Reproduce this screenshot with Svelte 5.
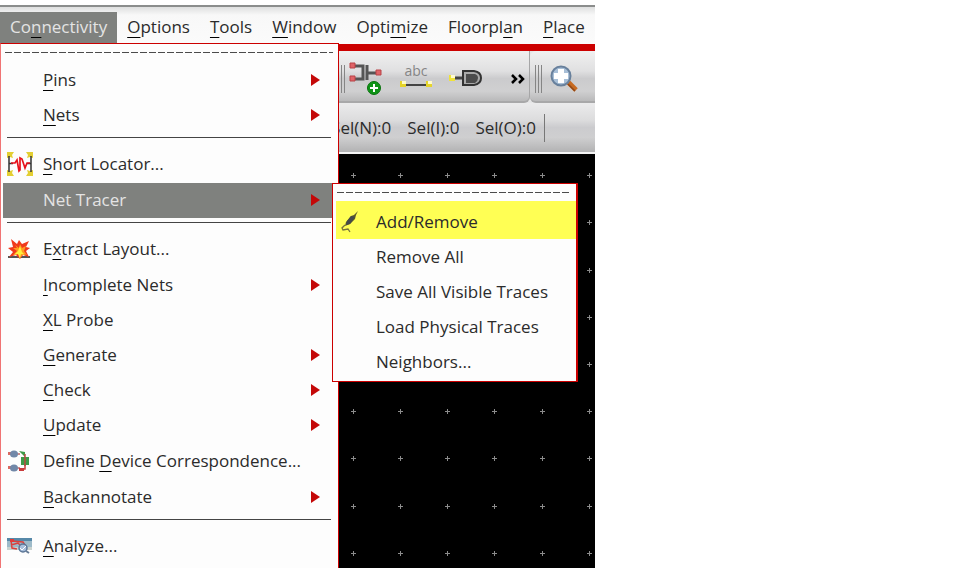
<script>
  const menus = [
    ['Co', 'n', 'nectivity'],
    ['', 'O', 'ptions'],
    ['', 'T', 'ools'],
    ['', 'W', 'indow'],
    ['Opti', 'm', 'ize'],
    ['Floorpl', 'a', 'n'],
    ['', 'P', 'lace'],
  ];

  const items = [
    { label: ['', 'P', 'ins'], sub: true },
    { label: ['', 'N', 'ets'], sub: true },
    { rule: true },
    { label: ['', 'S', 'hort Locator...'], icon: 'short' },
    { label: ['Net Tracer', '', ''], sub: true, open: true },
    { rule: true },
    { label: ['E', 'x', 'tract Layout...'], icon: 'extract' },
    { label: ['', 'I', 'ncomplete Nets'], sub: true },
    { label: ['', 'X', 'L Probe'] },
    { label: ['', 'G', 'enerate'], sub: true },
    { label: ['', 'C', 'heck'], sub: true },
    { label: ['', 'U', 'pdate'], sub: true },
    { label: ['Define ', 'D', 'evice Correspondence...'], icon: 'device' },
    { label: ['', 'B', 'ackannotate'], sub: true },
    { rule: true },
    { label: ['', 'A', 'nalyze...'], icon: 'analyze' },
  ];

  const tracer = ['Add/Remove', 'Remove All', 'Save All Visible Traces', 'Load Physical Traces', 'Neighbors...'];
  const counts = ['Sel(N):0', 'Sel(I):0', 'Sel(O):0'];

  const gridX = [23, 70, 117, 164, 212, 259, 306, 353, 400, 447, 494, 542, 589];
  const gridY = [21, 68, 116, 163, 210, 257, 304, 352, 399];
</script>

{#snippet mnemonic(parts)}<span class="label">{parts[0]}{#if parts[1]}<u>{parts[1]}</u>{/if}{parts[2]}</span>{/snippet}

{#snippet icon(name)}
  {#if name === 'short'}
    <svg width="26" height="26" viewBox="0 0 26 26" aria-hidden="true">
      <path d="M0 1h7l-2 3 1 3-3-1-3 1zM26 1h-7l2 3-1 3 3-1 3 1zM0 25h7l-2-3 1-3-3 1-3-1zM26 25h-7l2-3-1-3 3 1 3-1z" fill="#e3cf32" />
      <path d="M2 5v16M24 5v16M2 12.500h4M20 12.500h4" stroke="#333" stroke-width="1.500" fill="none" />
      <path d="M4 12h4l2-3 2 11 1-1V7l2 1 3 9 2-5h3" stroke="#e8121c" stroke-width="1.700" fill="none" />
    </svg>
  {:else if name === 'extract'}
    <svg width="26" height="26" viewBox="0 0 26 26" aria-hidden="true">
      <path d="M1 21h22" stroke="#555" stroke-width="2" />
      <path d="M4 3l6 5 2-4 3 4 7-3-3 6 4 1-4 3 3 6-6-2-3 4-4-4-7 2 4-5-5-4 5-1z" fill="#f03a1c" />
      <path d="M8 9l4 3 1-4 2 4 4-2-2 5 3 4-4-1-2 3-3-3-5 1 4-4-4-3h4z" fill="#ff9a1e" />
      <path d="M13 10l2 6 3 3-4-1-1 5-2-5-4 1 4-4z" fill="#ffef3c" />
    </svg>
  {:else if name === 'device'}
    <svg width="26" height="26" viewBox="0 0 26 26" aria-hidden="true">
      <path d="M1 6h12M1 20h12" stroke="#c98c8c" stroke-width="2" />
      <rect x="1" y="4" width="3" height="3" fill="#d96a62" /><rect x="1" y="18" width="3" height="3" fill="#d96a62" />
      <ellipse cx="7" cy="6" rx="4" ry="3.500" fill="#7188a8" /><ellipse cx="7" cy="20" rx="4" ry="3.500" fill="#7188a8" />
      <path d="M12 21h6v-6" stroke="#c9423c" stroke-width="1.500" fill="none" />
      <path d="M12 3l6 1v5l-3-3zM14 9h8v8h-8z" fill="#3e9b48" />
      <path d="M18 6v12" stroke="#b84840" stroke-width="1.500" /><rect x="12" y="20" width="5" height="3" fill="#c93c3c" />
    </svg>
  {:else if name === 'analyze'}
    <svg width="26" height="26" viewBox="0 0 26 26" aria-hidden="true">
      <path d="M0 5h25v12H0z" fill="#9dbac8" /><path d="M0 5h25v3H0z" fill="#5688a8" /><path d="M0 14h25v3H0z" fill="#c9d2cf" />
      <path d="M4 7l1 8 5 1M4 8l12 1 3 5M4 12l7-2 5 5" stroke="#dc403c" stroke-width="1.500" fill="none" />
      <rect x="3" y="6" width="4" height="3" fill="#e23b38" />
      <circle cx="16" cy="15" r="4" fill="#a8bfdc" stroke="#5b7596" stroke-width="1.500" />
      <path d="M13 15l2 2 4-4" stroke="#fff" stroke-width="1" fill="none" /><path d="M19 18l3 2" stroke="#687c96" stroke-width="2" />
    </svg>
  {:else if name === 'pen'}
    <svg width="20" height="26" viewBox="0 0 20 26" aria-hidden="true">
      <path d="M18 2l-2 4-1 4-5 5-5 2 1-4 5-6 3-1z" fill="#5c5b2a" />
      <path d="M11 7l4 1-5 7-4 1 1-4z" fill="#444a4b" />
      <path d="M5 16l-3 3 1 2 5-1 2 3" stroke="#77743a" stroke-width="1.300" fill="none" />
    </svg>
  {/if}
{/snippet}

<div class="window">
  <nav class="menubar" aria-label="Main menu">
    {#each menus as menu, i}
      <button class:active={i === 0}>{@render mnemonic(menu)}</button>
    {/each}
  </nav>

  <div class="toolbar">
    <div class="group tools">
      <span class="grip"></span>
      <button aria-label="Add pin">
        <svg width="34" height="34" viewBox="0 0 34 34">
          <path d="M5 4h9v13H5M18 3v15M18 11h11" stroke="#555" stroke-width="3" fill="none" />
          <path d="M1 1h5v5H1zM1 14h5v5H1zM27 8h5v5h-5z" fill="#e06468" stroke="#b84347" />
          <circle cx="25" cy="26" r="6.500" fill="#0f9417" stroke="#0a720f" />
          <path d="M25 22v8M21 26h8" stroke="#fff" stroke-width="2" />
        </svg>
      </button>
      <button aria-label="Label wire">
        <svg width="34" height="34" viewBox="0 0 34 34">
          <text x="17" y="14" text-anchor="middle" font-size="14" fill="#858585">abc</text>
          <path d="M6 23h23" stroke="#444" stroke-width="2" />
          <path d="M1 19h6v6H1zM27 19h6v6h-6z" fill="#e5d42a" /><path d="M3 19h4v3H3zM29 19h4v3h-4z" fill="#fffbc8" />
        </svg>
      </button>
      <button aria-label="Create instance">
        <svg width="34" height="34" viewBox="0 0 34 34">
          <path d="M5 16h10" stroke="#444" stroke-width="3" />
          <path d="M0 13h6v6H0z" fill="#efe23a" /><path d="M2 13h4v3H2z" fill="#fffbd0" />
          <path d="M14 9h11q7 1 7 7t-7 7H14z" fill="#aaa" stroke="#333" stroke-width="2" />
          <path d="M17 12h9q3 1 3 4t-3 5h-9z" fill="#4c4c4c" />
        </svg>
      </button>
      <button class="more" aria-label="More tools">
        <svg width="14" height="12" viewBox="0 0 14 12"><path d="M1 2l4 4-4 4M8 2l4 4-4 4" stroke="#000" stroke-width="2.500" fill="none" /></svg>
      </button>
    </div>
    <div class="group zoom">
      <span class="grip"></span>
      <button aria-label="Zoom in">
        <svg width="30" height="30" viewBox="0 0 30 30">
          <path d="M19 18l8 8" stroke="#c76a20" stroke-width="5" /><path d="M19 20l7 7" stroke="#8f4818" stroke-width="1.500" />
          <circle cx="12" cy="12" r="9.500" fill="#a8bfd7" stroke="#68809c" stroke-width="2" />
          <path d="M12 5v14M5 12h14" stroke="#fff" stroke-width="6" />
        </svg>
      </button>
    </div>
  </div>

  <div class="status">
    {#each counts as count}<span>{count}</span>{/each}
    <i></i>
  </div>

  <main>
    <svg width="100%" height="100%" shape-rendering="crispEdges" aria-hidden="true">
      {#each gridY as y}
        {#each gridX as x}
          <path d="M{x - 2} {y}h5v1h-5zM{x} {y - 2}h1v5h-1z" fill="#8c8c8c" />
        {/each}
      {/each}
    </svg>
  </main>

  <ul class="menu">
    <li class="tear"></li>
    {#each items as item}
      {#if item.rule}
        <li class="rule"></li>
      {:else}
        <li class="row" class:tall={item.icon} class:open={item.open}>
          <button>
            <span class="icon">{@render icon(item.icon)}</span>
            {@render mnemonic(item.label)}
            {#if item.sub}<svg class="arrow" width="9" height="12" viewBox="0 0 9 12" aria-hidden="true"><path d="M0 0l9 6-9 6z" fill="#c40808" /></svg>{/if}
          </button>
          {#if item.open}
            <ul class="menu submenu">
              <li class="tear"></li>
              {#each tracer as label, i}
                <li class="row" class:marked={i === 0}>
                  <button>
                    <span class="icon">{#if i === 0}{@render icon('pen')}{/if}</span>
                    <span class="label">{label}</span>
                  </button>
                </li>
              {/each}
            </ul>
          {/if}
        </li>
      {/if}
    {/each}
  </ul>
</div>

<style>
  :global(body) {
    margin: 0;
    background: #fff;
  }
  .window {
    position: relative;
    box-sizing: border-box;
    max-width: 595px;
    height: calc(100vh - 1px);
    min-height: 568px;
    padding-top: 5px;
    display: flex;
    flex-direction: column;
    overflow: hidden;
    font: 17px/24px "Open Sans", "Noto Sans", sans-serif;
    color: #2b2b2b;
  }
  button {
    font: inherit;
    color: inherit;
    border: 0;
    padding: 0;
    margin: 0;
    background: none;
    white-space: nowrap;
  }
  svg {
    display: block;
    flex: none;
  }
  u {
    text-decoration: underline 1px #000;
    text-underline-offset: 4px;
    text-decoration-skip-ink: none;
  }
  .menubar {
    display: flex;
    flex: none;
    box-sizing: border-box;
    height: 46px;
    padding-top: 5px;
    border-top: 2px solid #8b8d8c;
    border-bottom: 7px solid #c00;
    background: linear-gradient(#dedfdf, #f8f8f8 8px, #fbfbfb);
  }
  .menubar button {
    padding: 0 10px 2px;
  }
  .menubar .active {
    background: #7f817e;
    color: #e4e4e4;
  }
  .toolbar {
    display: flex;
    flex: none;
    justify-content: flex-end;
    height: 52px;
    background: #e6e6e7;
  }
  .group {
    display: flex;
    align-items: center;
    box-sizing: border-box;
    padding-top: 6px;
    border-bottom: 2px solid #a8a8a9;
    background: linear-gradient(#f0f0f0, #e0e0e1 40%, #cbcbcd 55%, #d0d0d1 80%, #b9b9ba);
  }
  .tools {
    flex: 1;
    justify-content: flex-end;
    gap: 16px;
    padding-right: 4px;
    border-right: 1px solid #a6a6a7;
    border-radius: 0 0 6px 0;
  }
  .tools .grip {
    margin-right: -12px;
  }
  .more {
    margin-left: 12px;
  }
  .zoom {
    gap: 7px;
    width: 65px;
    padding-left: 5px;
    border-radius: 6px 0 0 6px;
  }
  .grip {
    width: 3px;
    height: 28px;
    border: solid #858585;
    border-width: 0 1px;
    padding: 0 1px;
    background: linear-gradient(#858585, #858585) center / 1px 100% no-repeat;
  }
  .status {
    display: flex;
    flex: none;
    align-items: center;
    justify-content: flex-end;
    gap: 16px;
    box-sizing: border-box;
    height: 51px;
    padding-right: 50px;
    border-bottom: 2px solid #f4f4f4;
    background: linear-gradient(#ebebec, #dcdcdd 35%, #cbcbce 50%, #cfcfd0 70%, #b2b2b3);
  }
  .status i {
    width: 1px;
    height: 28px;
    margin-left: -8px;
    background: #777;
  }
  main {
    flex: 1;
    min-height: 0;
    background: #000;
  }
  .menu {
    position: absolute;
    z-index: 1;
    top: 43px;
    left: 0;
    box-sizing: border-box;
    width: 339px;
    min-height: 560px;
    margin: 0;
    padding: 0;
    list-style: none;
    border: 1px solid #cc0000;
    border-left-color: #f07474;
    background: #fdfdfd;
    color: #2b2b2b;
  }
  .tear {
    height: 19px;
    background: repeating-linear-gradient(90deg, #4b4b4b 0 7px, transparent 7px 9px) 4px 8px / 328px 1px no-repeat;
  }
  .rule {
    height: 1px;
    margin: 4px 7px 8px 6px;
    background: #444;
  }
  .row {
    position: relative;
    height: 35px;
  }
  .row.tall {
    height: 37px;
  }
  .row > button {
    display: flex;
    align-items: center;
    width: 100%;
    height: 100%;
    padding: 0 18px 2px 6px;
    text-align: left;
  }
  .icon {
    flex: none;
    width: 36px;
  }
  .arrow {
    margin-left: auto;
  }
  .row.open {
    margin: 0 0 0 2px;
    background: #7f817e;
    color: #e4e4e4;
  }
  .row.open > button {
    padding-left: 4px;
  }
  .submenu {
    top: 0;
    left: 329px;
    width: 246px;
    min-height: 0;
    padding-bottom: 2px;
    border-color: #cc0000;
    border-right-width: 2px;
  }
  .submenu .tear {
    height: 17px;
    background-size: 233px 1px;
  }
  .submenu .row > button {
    padding: 0 0 0 7px;
  }
  .submenu .marked {
    height: 38px;
    margin-left: 3px;
    background: #ffff54;
  }
  .submenu .marked > button {
    padding: 3px 0 0 4px;
  }
</style>
